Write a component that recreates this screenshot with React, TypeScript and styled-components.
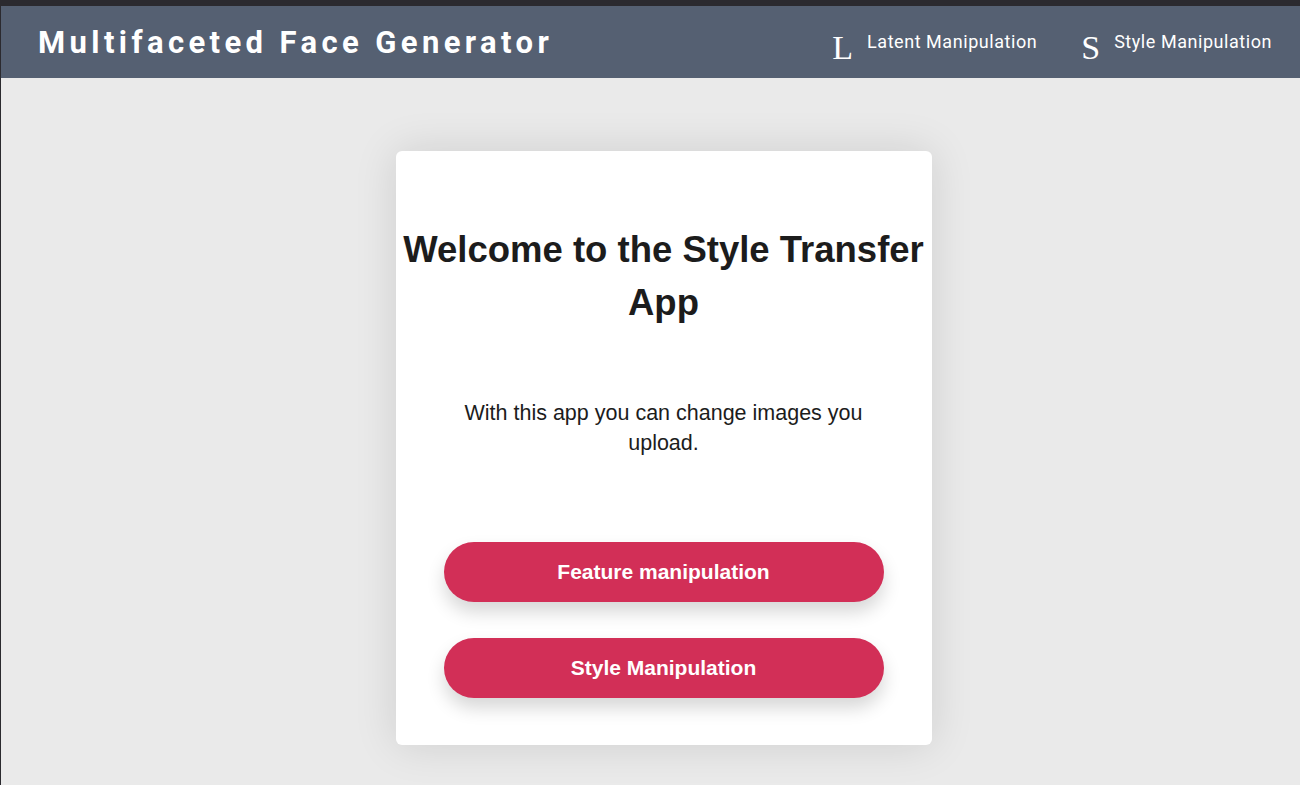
import React from "react";
import styled, { createGlobalStyle } from "styled-components";

const Global = createGlobalStyle`
  html, body { margin: 0; padding: 0; }
  body {
    background: #eaeaea;
    font-family: "Liberation Sans", Arial, sans-serif;
    border-left: 1px solid #2b2a2f;
    min-height: 785px;
    box-sizing: border-box;
  }
`;

const TopStrip = styled.div`
  height: 6px;
  background: #2b2a2f;
`;

const Header = styled.header`
  height: 72px;
  background: #556072;
  display: flex;
  align-items: center;
  justify-content: space-between;
  padding: 0 28px 0 37px;
`;

const Title = styled.h1`
  margin: 0;
  font-family: Roboto, "Noto Sans", sans-serif;
  font-weight: 700;
  font-size: 31px;
  letter-spacing: 4.4px;
  color: #ffffff;
`;

const Nav = styled.nav`
  display: flex;
  align-items: center;
  gap: 44px;
`;

const NavItem = styled.a`
  display: flex;
  align-items: center;
  gap: 14px;
  color: #ffffff;
  text-decoration: none;
  cursor: pointer;
`;

const NavLetter = styled.span`
  font-family: "Liberation Serif", "Times New Roman", serif;
  font-size: 34px;
  line-height: 34px;
  margin-top: 12px;
`;

const NavLabel = styled.span`
  font-family: Roboto, "Noto Sans", sans-serif;
  font-size: 18px;
  letter-spacing: 0.55px;
  line-height: 20px;
`;

const Main = styled.main`
  display: flex;
  justify-content: center;
  padding: 73px 0 40px 26px;
`;

const Card = styled.section`
  width: 536px;
  box-sizing: border-box;
  background: #ffffff;
  border-radius: 6px;
  box-shadow: 0 0 44px rgba(0, 0, 0, 0.12);
  padding: 72px 4px 47px;
  display: flex;
  flex-direction: column;
  align-items: center;
  text-align: center;
`;

const Heading = styled.h2`
  margin: 0;
  font-size: 36.5px;
  line-height: 53px;
  font-weight: 700;
  color: #1c1c1c;
`;

const Text = styled.p`
  margin: 69px 0 0;
  max-width: 420px;
  font-size: 21.5px;
  line-height: 30px;
  color: #1c1c1c;
`;

const Buttons = styled.div`
  margin-top: 84px;
  display: flex;
  flex-direction: column;
  gap: 36px;
`;

const Button = styled.button`
  width: 440px;
  height: 60px;
  border: none;
  border-radius: 30px;
  background: #d22f57;
  color: #ffffff;
  font-family: "Liberation Sans", Arial, sans-serif;
  font-weight: 700;
  font-size: 21px;
  box-shadow: 0 10px 18px rgba(0, 0, 0, 0.16);
  cursor: pointer;
`;

export default function App() {
  return (
    <>
      <Global />
      <TopStrip />
      <Header>
        <Title>Multifaceted Face Generator</Title>
        <Nav>
          <NavItem>
            <NavLetter>L</NavLetter>
            <NavLabel>Latent Manipulation</NavLabel>
          </NavItem>
          <NavItem>
            <NavLetter>S</NavLetter>
            <NavLabel>Style Manipulation</NavLabel>
          </NavItem>
        </Nav>
      </Header>
      <Main>
        <Card>
          <Heading>Welcome to the Style Transfer App</Heading>
          <Text>With this app you can change images you upload.</Text>
          <Buttons>
            <Button>Feature manipulation</Button>
            <Button>Style Manipulation</Button>
          </Buttons>
        </Card>
      </Main>
    </>
  );
}
